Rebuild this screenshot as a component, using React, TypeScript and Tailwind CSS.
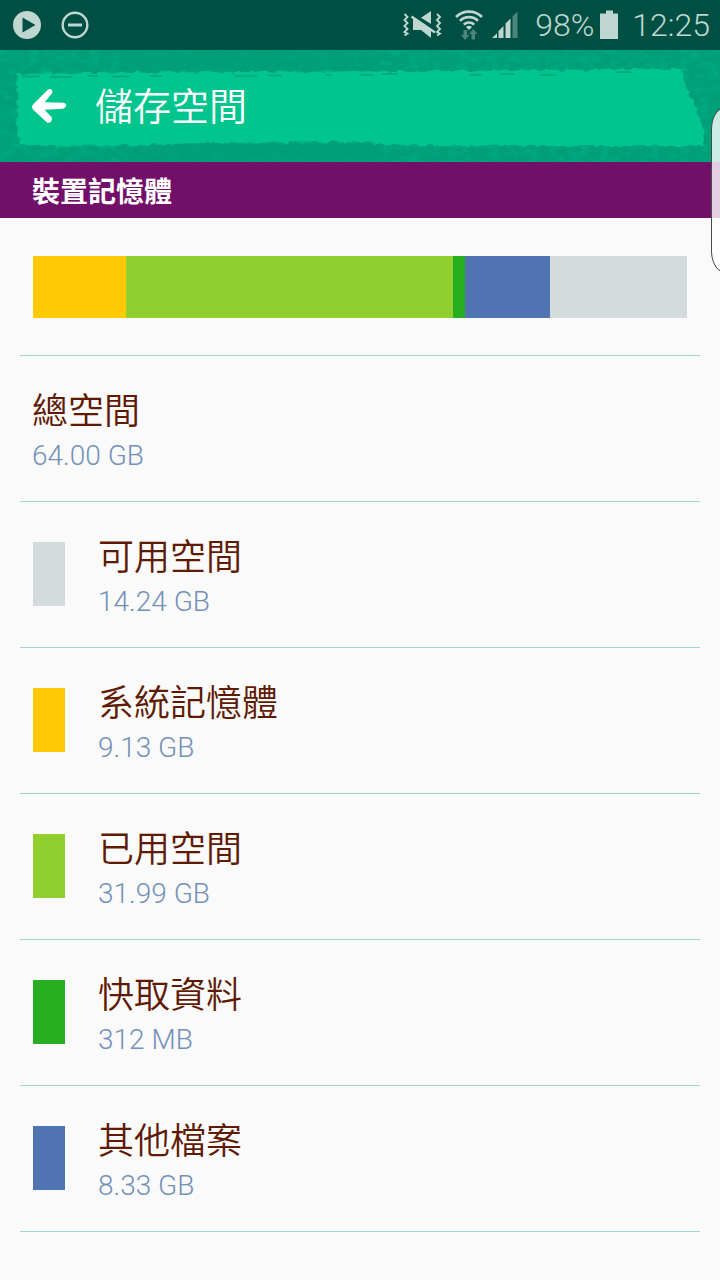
import React from "react";

type Entry = { label: string; size: string; swatch?: string };

const entries: Entry[] = [
  { label: "總空間", size: "64.00 GB" },
  { label: "可用空間", size: "14.24 GB", swatch: "bg-[#d3dbdc]" },
  { label: "系統記憶體", size: "9.13 GB", swatch: "bg-[#ffca05]" },
  { label: "已用空間", size: "31.99 GB", swatch: "bg-[#91cf2f]" },
  { label: "快取資料", size: "312 MB", swatch: "bg-[#27ae20]" },
  { label: "其他檔案", size: "8.33 GB", swatch: "bg-[#4f74b1]" },
];

const segments = [
  { share: 93, color: "bg-[#ffca05]" },
  { share: 327, color: "bg-[#91cf2f]" },
  { share: 12, color: "bg-[#27ae20]" },
  { share: 85, color: "bg-[#4f74b1]" },
  { share: 137, color: "bg-[#d3dbdc]" },
];

function StatusBar() {
  return (
    <div className="flex h-[50px] items-center bg-[#004f43] pr-2.5 pl-3 text-[#bfd6d1]">
      <svg className="h-[30px] w-[30px]" viewBox="0 0 30 30" aria-hidden="true">
        <path fill="currentColor" fillRule="evenodd" d="M15 1a14 14 0 1 0 0 28 14 14 0 0 0 0-28ZM10.500 7.500v15L23.500 15Z" />
      </svg>
      <svg className="ml-[18px] h-[30px] w-[30px]" viewBox="0 0 30 30" aria-hidden="true">
        <circle cx="15" cy="15" r="12.300" fill="none" stroke="currentColor" strokeWidth="2.400" />
        <path d="M8 15h14" stroke="currentColor" strokeWidth="3" />
      </svg>
      <div className="flex-1" />
      <svg className="h-[30px] w-[42px]" viewBox="0 0 42 30" aria-hidden="true">
        <path d="M3.500 4l3 3-3 3 3 3-3 3 3 3-3 3 3 1.500-3 2M36 4l3 3-3 3 3 3-3 3 3 3-3 3 3 1.500-3 2" fill="none" stroke="currentColor" strokeWidth="1.900" />
        <path d="M30 1v13L20 7.800Z" fill="currentColor" />
        <path d="M12 8l18 11.500V28L20 20h-8Z" fill="currentColor" />
        <path d="M10.500 6.500 34 22.500" stroke="currentColor" strokeWidth="2.200" />
      </svg>
      <svg className="ml-[11px] h-[32px] w-[30px]" viewBox="0 0 30 32" aria-hidden="true">
        <path d="M2 8a18.500 18.500 0 0 1 26 0M6 11.900a12.800 12.800 0 0 1 18 0M9.800 15.600a7.500 7.500 0 0 1 10.400 0" fill="none" stroke="currentColor" strokeWidth="2.700" />
        <path d="M12 18a4.500 4.500 0 0 1 6 0L15 21Z" fill="currentColor" />
        <path d="M9.500 21h3.500v5h2.500L11.200 31 7 26h2.500ZM17.500 30.500V25H15l4.200-5 4.300 5H21v5.500Z" fill="#4b857c" />
      </svg>
      <svg className="ml-[7px] h-[30px] w-[28px]" viewBox="0 0 28 30" aria-hidden="true">
        <path d="M1 28l5-4.700V28ZM7.500 28v-7l5-5v12ZM14.500 28V13.500l5-5V28Z" fill="currentColor" />
        <path d="M21.500 28V6.500l5-5V28Z" fill="#4b857c" />
      </svg>
      <span className="ml-4 text-[32px] leading-10 font-light">98%</span>
      <svg className="ml-1.5 h-[30px] w-[18px]" viewBox="0 0 18 30" aria-hidden="true">
        <path d="M6 .5h7v3h5v25.500H0V3.500h6Z" fill="currentColor" />
      </svg>
      <span className="ml-3.5 text-[32px] leading-10 font-light">12:25</span>
    </div>
  );
}

function BrushBackdrop() {
  return (
    <svg className="absolute inset-0 h-full w-full" viewBox="0 0 720 112" preserveAspectRatio="none" aria-hidden="true">
      <defs>
        <filter id="grain" x="0" y="0" width="100%" height="100%" colorInterpolationFilters="sRGB">
          <feTurbulence type="fractalNoise" baseFrequency="0.1 0.16" numOctaves="4" seed="4" />
          <feColorMatrix values="0 0 0 0 0.01  0 0 0 0 0.72  0 0 0 0 0.54  1.700 0 0 0 -0.720" />
        </filter>
        <filter id="rough" x="-5%" y="-15%" width="110%" height="130%" colorInterpolationFilters="sRGB">
          <feTurbulence type="fractalNoise" baseFrequency="0.1 0.16" numOctaves="3" seed="9" result="n" />
          <feDisplacementMap in="SourceGraphic" in2="n" scale="6" xChannelSelector="R" yChannelSelector="G" />
        </filter>
      </defs>
      <rect width="720" height="112" fill="#009f78" />
      <rect width="720" height="112" filter="url(#grain)" opacity=".7" />
      <path d="M120 0H380V20H120ZM130 94H370L390 112H130Z" fill="#009f78" opacity=".6" />
      <path filter="url(#rough)" fill="#02c58d" d="M16 24 90 23 240 22 400 21 540 20 610 19 683 19 686 37 695 55 703 76 704 92 704 96 540 96 390 95 370 92 200 93 150 95 45 96 20 95 16 75 18 50Z" />
      <path d="M22 26.500h18M50 27h22M88 26h10M112 26.500h17M150 26h12M235 26h22M268 25.500h14M326 25h6M360 25h14M382 24h16M470 25h12M500 24h14M540 25h16M617 22h14" stroke="#00a57c" strokeWidth="1.500" />
    </svg>
  );
}

function TitleBar() {
  return (
    <header className="relative h-28 overflow-hidden bg-[#00a078]">
      <BrushBackdrop />
      <div className="relative flex h-full items-center pl-[30px] text-white">
        <button type="button" aria-label="返回" className="h-10 w-10">
          <svg className="h-10 w-10" viewBox="0 0 40 40" aria-hidden="true">
            <path d="M17.500 4C21 1.500 24 4.500 21.500 8L14.500 16.200 33 16.800C37.500 17.200 37 21.500 33 22.700L14.500 23.800 21.500 31C23 34.500 20 38 17 36.500L3.500 24C1.500 22 1.500 20 3.500 18Z" fill="currentColor" />
          </svg>
        </button>
        <h1 className="ml-[25px] pt-0.5 text-[38px] leading-[48px] font-[350]">儲存空間</h1>
      </div>
    </header>
  );
}

export default function App() {
  return (
    <div className="relative min-h-screen overflow-hidden bg-[#fafafa] font-[Roboto,'Noto_Sans_CJK_TC',sans-serif]">
      <StatusBar />
      <TitleBar />
      <main>
        <h2 className="flex h-14 items-center bg-[#720f68] px-8 pt-1.5 text-[28px] leading-9 font-bold text-white">裝置記憶體</h2>
        <div className="mx-[33px] mt-[38px] flex h-[62px]">
          {segments.map((s) => (
            <div key={s.color} className={s.color} style={{ flexGrow: s.share, flexBasis: 0 }} />
          ))}
        </div>
        <ul className="mx-5 mt-[37px] border-t border-t-[#9fd6cf]">
          {entries.map((e) => (
            <li key={e.label} className="flex h-[146px] items-start gap-[33px] border-b border-b-[#9fd6cf] px-3">
              {e.swatch && <span className={`mt-10 ml-px h-16 w-8 ${e.swatch}`} />}
              <div className="pt-[34px]">
                <p className="text-[36px] leading-[44px] font-[350] text-[#5f1a04]">{e.label}</p>
                <p className="text-[28px] leading-[44px] font-light text-[#7391b8]">{e.size}</p>
              </div>
            </li>
          ))}
        </ul>
      </main>
      <div className="absolute top-[108px] -right-4 h-[164px] w-[25px] rounded-[14px/24px] border border-[#454b4a] bg-white/80" />
    </div>
  );
}
